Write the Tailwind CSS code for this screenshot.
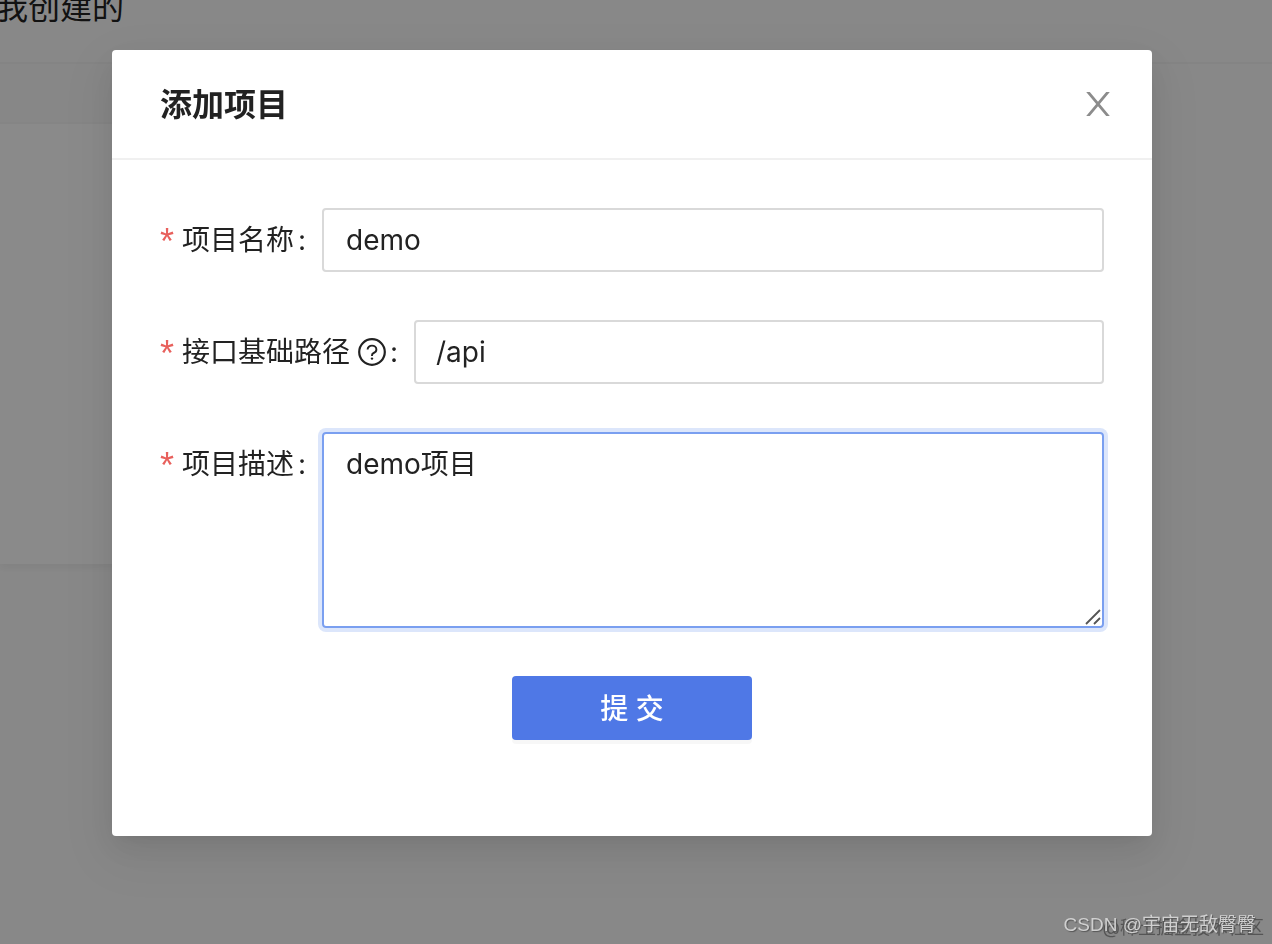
<!DOCTYPE html>
<html lang="zh-CN">
<head>
  <meta charset="UTF-8" />
  <meta name="viewport" content="width=device-width, initial-scale=1.0">
  <title>添加项目</title>
  <script src="https://cdn.jsdelivr.net/npm/@tailwindcss/browser@4"></script>
</head>
<body class="bg-[#f8f8f8] text-[#222222] min-h-screen overflow-hidden font-[Inter,'Noto_Sans_CJK_SC',sans-serif]">

  <!-- Page behind the dialog -->
  <div class="flex flex-col" aria-hidden="true">
    <header class="h-16 border-b-2 border-[#f1f1f1]">
      <p class="-ml-1 -mt-3.5 text-[32px] leading-11">我创建的</p>
    </header>
    <section class="mr-60 shadow-[0_4px_8px_rgb(0_0_0/0.05)]">
      <div class="h-15 bg-[#f6f6f6] border-b-2 border-[#f2f2f2]"></div>
      <div class="h-110 bg-[#fcfcfc]"></div>
    </section>
  </div>

  <!-- Dialog -->
  <div class="fixed inset-0 bg-black/45">
    <div role="dialog" aria-modal="true" aria-labelledby="dialog-title"
      class="mt-[50px] ml-28 mr-30 bg-white rounded-sm shadow-[0_6px_12px_-8px_rgb(0_0_0/0.12),0_12px_32px_rgb(0_0_0/0.08),0_18px_56px_16px_rgb(0_0_0/0.05)]">
      <header class="flex justify-between items-center h-[110px] pl-12 pr-[42px] border-b-2 border-[#f0f0f0]">
        <h2 id="dialog-title" class="pt-0.5 text-[32px] leading-11 font-bold">添加项目</h2>
        <button type="button" aria-label="关闭" class="text-[#8c8c8c]">
          <svg class="w-6 h-6" viewBox="0 0 24 24" fill="currentColor">
            <path d="M.2 0h3.600L12 9.800 20.200 0h3.600L13.800 12l10 12h-3.600L12 14.200 3.800 24H.2l10-12z" />
          </svg>
        </button>
      </header>

      <form class="flex flex-col gap-12 px-12 pt-12 pb-24 text-[28px] leading-11">
        <div class="flex items-center">
          <label for="name" class="flex items-center w-[162px] shrink-0">
            <span class="w-[22px] pt-1 text-[36px] font-['Liberation_Sans',sans-serif] text-[#e8605c]">*</span>项目名称<span class="ml-1">:</span>
          </label>
          <input type="text" id="name" value="demo"
            class="flex-1 min-w-0 h-16 px-[22px] border-2 border-[#d9d9d9] rounded-sm outline-none" />
        </div>

        <div class="flex items-center">
          <label for="path" class="flex items-center w-[254px] shrink-0">
            <span class="w-[22px] pt-1 text-[36px] font-['Liberation_Sans',sans-serif] text-[#e8605c]">*</span>接口基础路径
            <svg class="w-7 h-7 ml-2" viewBox="0 0 28 28" fill="none" stroke="currentColor" stroke-width="2.200">
              <circle cx="14" cy="14" r="12.800" />
              <path stroke-width="1.900" d="M9.600 11.600C9.600 9.200 11.500 7.600 14 7.600s4.400 1.600 4.400 3.900c0 1.800-1.200 2.900-2.700 3.500-1.200.5-1.700 1.100-1.700 2.200v.9" />
              <circle cx="14" cy="20.600" r="1.200" fill="currentColor" stroke="none" />
            </svg>
            <span class="ml-1">:</span>
          </label>
          <input type="text" id="path" value="/api"
            class="flex-1 min-w-0 h-16 px-5 border-2 border-[#d9d9d9] rounded-sm outline-none" />
        </div>

        <div class="flex items-start">
          <label for="desc" class="flex items-center w-[162px] h-16 shrink-0">
            <span class="w-[22px] pt-1 text-[36px] font-['Liberation_Sans',sans-serif] text-[#e8605c]">*</span>项目描述<span class="ml-1">:</span>
          </label>
          <div class="relative flex flex-1">
            <textarea id="desc"
              class="flex-1 min-w-0 h-[196px] px-[22px] py-2 resize-none border-2 border-[#7a9ff0] rounded-sm outline-none shadow-[0_0_0_4px_#dce6fb]">demo项目</textarea>
            <svg class="absolute right-[3px] bottom-[3px] w-4 h-4 text-[#555555]" viewBox="0 0 16 16" stroke="currentColor" stroke-width="1.800">
              <path d="M1 15 15 1M9 15l6-6" />
            </svg>
          </div>
        </div>

        <button type="submit" class="self-center w-60 h-16 pt-0.5 bg-[#4f78e6] text-white font-medium rounded-sm shadow-[0_4px_0_rgb(0_0_0/0.03)]">提 交</button>
      </form>
    </div>
  </div>

  <!-- Watermarks -->
  <p class="fixed right-2 bottom-1 text-[18px] leading-6 text-[#555555]">@稀土掘金技术社区</p>
  <p class="fixed right-4 bottom-[7px] text-[19px] leading-6 text-[#d0d0d0] [text-shadow:1px_1px_1px_#555555] font-['Liberation_Sans','Noto_Sans_CJK_SC',sans-serif]">CSDN @宇宙无敌臀臀</p>
</body>
</html>
